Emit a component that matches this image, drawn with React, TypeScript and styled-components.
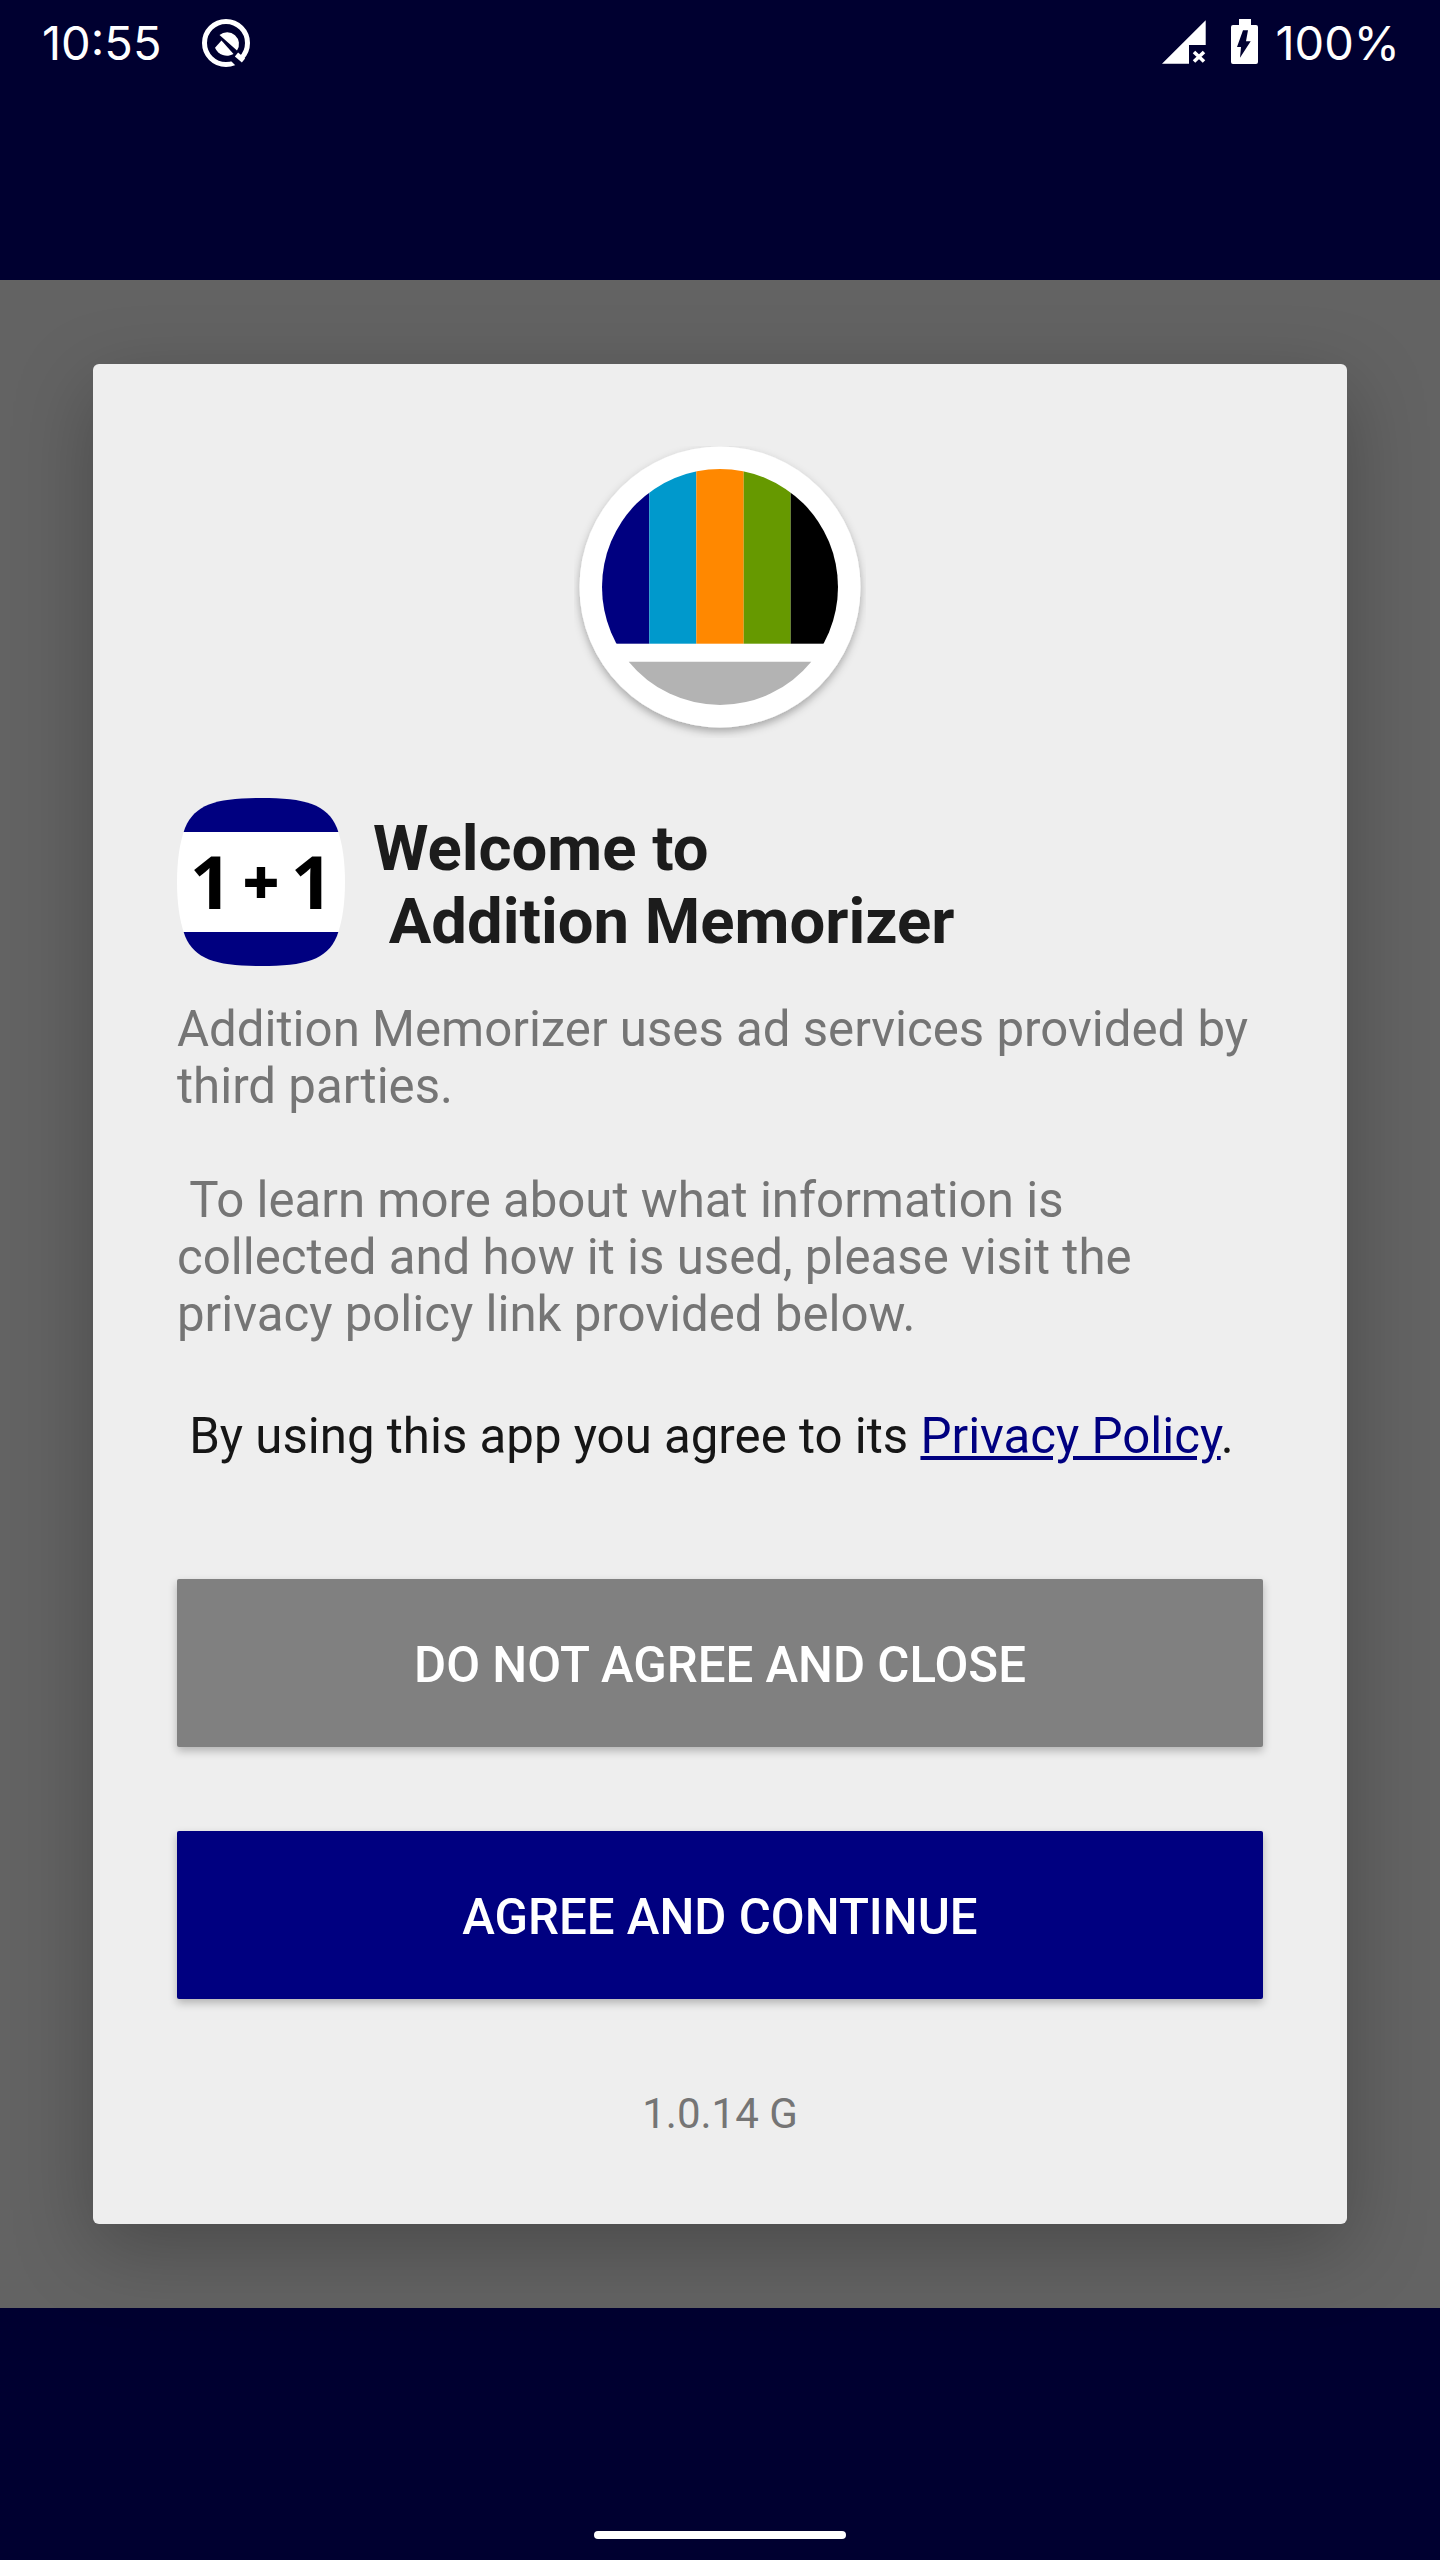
import React from "react";
import styled, { createGlobalStyle } from "styled-components";

const Global = createGlobalStyle`
  html, body { margin: 0; padding: 0; background: #000030; }
  body { font-family: Roboto, "Liberation Sans", sans-serif; }
`;

const Screen = styled.div`
  width: 1440px;
  height: 2560px;
  display: flex;
  flex-direction: column;
  background: #000030;
  overflow: hidden;
`;

const StatusBar = styled.div`
  height: 86px;
  flex: none;
  padding: 0 40px 0 42px;
  box-sizing: border-box;
  display: flex;
  align-items: center;
  justify-content: space-between;
  color: #fff;
`;

const StatusGroup = styled.div`
  display: flex;
  align-items: center;
`;

const StatusText = styled.span`
  font-family: Inter, Roboto, sans-serif;
  font-size: 47px;
  line-height: 86px;
`;

const AppBar = styled.div`
  height: 194px;
  flex: none;
`;

const Overlay = styled.div`
  height: 2028px;
  flex: none;
  background: #636363;
  padding: 84px 93px 0;
  box-sizing: border-box;
`;

const Card = styled.div`
  height: 1860px;
  background: #eeeeee;
  border-radius: 6px;
  box-shadow: 0 24px 80px rgba(0, 0, 0, 0.26);
  padding: 82px 84px 0;
  box-sizing: border-box;
  display: flex;
  flex-direction: column;
`;

const Badge = styled.svg`
  width: 292px;
  height: 292px;
  align-self: center;
  flex: none;
`;

const TitleRow = styled.div`
  display: flex;
  align-items: center;
  margin-top: 60px;
  gap: 28px;
`;

const Title = styled.h1`
  margin: 0;
  padding-top: 5px;
  font-size: 63.4px;
  line-height: 73px;
  font-weight: 700;
  color: #1c1c1c;
  white-space: pre;
  font-family: Roboto, sans-serif;
`;

const Body = styled.p`
  margin: 35px 0 0;
  font-size: 49.2px;
  line-height: 57px;
  color: #757575;
  white-space: pre-wrap;
`;

const Agreement = styled.p`
  margin: 65px 0 0;
  font-size: 49.2px;
  line-height: 57px;
  color: #161616;
  white-space: pre-wrap;
`;

const PolicyLink = styled.a`
  color: #000080;
  text-decoration: underline;
`;

const ActionButton = styled.button<{ $primary?: boolean }>`
  display: block;
  width: 100%;
  height: 168px;
  flex: none;
  border: 0;
  border-radius: 2px;
  padding: 3px 0 0;
  margin-top: ${(p) => (p.$primary ? "84px" : "114px")};
  background: ${(p) => (p.$primary ? "#000080" : "#808080")};
  color: #fff;
  font-family: Roboto, sans-serif;
  font-size: 49.2px;
  font-weight: 500;
  box-shadow: 0 4px 8px rgba(0, 0, 0, 0.25);
  text-transform: uppercase;
`;

const Version = styled.div`
  margin-top: 91px;
  text-align: center;
  font-size: 42px;
  line-height: 48px;
  color: #757575;
`;

const NavBar = styled.div`
  flex: 1;
  display: flex;
  justify-content: center;
  align-items: flex-end;
  padding-bottom: 21px;
`;

const HomeHandle = styled.div`
  width: 252px;
  height: 8px;
  border-radius: 4px;
  background: #fff;
`;

const QIcon = styled.svg`
  width: 52px;
  height: 52px;
  margin-left: 39px;
`;

const SignalIcon = styled.svg`
  width: 46px;
  height: 46px;
  margin-bottom: 2px;
`;

const BatteryIcon = styled.svg`
  width: 28px;
  height: 46px;
  margin-left: 24px;
  margin-bottom: 2px;
`;

const Percent = styled(StatusText)`
  margin-left: 16px;
`;

const AppIcon = styled.svg`
  width: 168px;
  height: 168px;
  flex: none;
`;

export default function App() {
  return (
    <Screen>
      <Global />
      <StatusBar>
        <StatusGroup>
          <StatusText>10:55</StatusText>
          <QIcon viewBox="0 0 52 52">
            <circle cx="26" cy="26" r="21.5" fill="none" stroke="#fff" strokeWidth="5" />
            <path d="M19.5 18A11.8 11.8 0 0 1 37 33.5Z" fill="#fff" />
            <path d="M15 30.7L21.5 23.5L33.5 37A13 13 0 0 1 15 30.7Z" fill="#fff" />
            <path d="M37 38L43 44L37 50L31 44Z" fill="#000030" />
            <path d="M36.5 37.5L43.5 43.5" stroke="#fff" strokeWidth="5" />
          </QIcon>
        </StatusGroup>
        <StatusGroup>
          <SignalIcon viewBox="0 0 46 46">
            <path d="M1 44.7 44.7 1.3V26H28v18.7z" fill="#fff" />
            <path d="M33 33l10 9.5M43 33 33 42.5" stroke="#fff" strokeWidth="3.6" />
          </SignalIcon>
          <BatteryIcon viewBox="0 0 28 46">
            <path d="M8 0h12v6h5a2 2 0 0 1 2 2v35a2 2 0 0 1-2 2H2a2 2 0 0 1-2-2V8a2 2 0 0 1 2-2h6z" fill="#fff" />
            <path d="M12 11.3 6 28h4l-1 10.7L19.7 22.3H15l2-11z" fill="#000030" />
          </BatteryIcon>
          <Percent>100%</Percent>
        </StatusGroup>
      </StatusBar>
      <AppBar />
      <Overlay>
        <Card>
          <Badge viewBox="0 0 292 292">
            <defs>
              <clipPath id="dome">
                <circle cx="146" cy="141" r="118" />
              </clipPath>
              <filter id="soft" x="-20%" y="-20%" width="140%" height="140%">
                <feDropShadow dx="0" dy="4" stdDeviation="4" floodColor="#000" floodOpacity="0.3" />
              </filter>
            </defs>
            <circle cx="146" cy="141" r="140.5" fill="#fff" filter="url(#soft)" />
            <g clipPath="url(#dome)">
              <rect x="0" y="0" width="75.3" height="197.7" fill="#000080" />
              <rect x="75.3" y="0" width="47" height="197.7" fill="#0099cc" />
              <rect x="122.3" y="0" width="47.4" height="197.7" fill="#ff8800" />
              <rect x="169.7" y="0" width="47" height="197.7" fill="#669900" />
              <rect x="216.7" y="0" width="75.3" height="197.7" fill="#000" />
            </g>
            <path d="M54.7 215.7H237.3A118 118 0 0 1 54.7 215.7Z" fill="#b3b3b3" />
          </Badge>
          <TitleRow>
            <AppIcon viewBox="0 0 168 168">
              <defs>
                <clipPath id="squircle">
                  <path d="M84 0C128 0 150 6 160 30 166 46 168 66 168 84 168 102 166 122 160 138 150 162 128 168 84 168 40 168 18 162 8 138 2 122 0 102 0 84 0 66 2 46 8 30 18 6 40 0 84 0Z" />
                </clipPath>
              </defs>
              <g clipPath="url(#squircle)">
                <rect width="168" height="168" fill="#fff" />
                <rect width="168" height="34" fill="#000080" />
                <rect y="134" width="168" height="34" fill="#000080" />
              </g>
              <text x="34" y="111" textAnchor="middle" fontFamily="'Open Sans', sans-serif" fontWeight="700" fontSize="74" fill="#000">1</text>
              <text x="84" y="107" textAnchor="middle" fontFamily="'Open Sans', sans-serif" fontWeight="800" fontSize="64" fill="#000">+</text>
              <text x="135" y="111" textAnchor="middle" fontFamily="'Open Sans', sans-serif" fontWeight="700" fontSize="74" fill="#000">1</text>
            </AppIcon>
            <Title>{"Welcome to\n Addition Memorizer"}</Title>
          </TitleRow>
          <Body>
            {"Addition Memorizer uses ad services provided by third parties.\n\n To learn more about what information is collected and how it is used, please visit the privacy policy link provided below."}
          </Body>
          <Agreement>
            {" By using this app you agree to its "}
            <PolicyLink>Privacy Policy</PolicyLink>.
          </Agreement>
          <ActionButton>Do not agree and close</ActionButton>
          <ActionButton $primary>Agree and continue</ActionButton>
          <Version>1.0.14 G</Version>
        </Card>
      </Overlay>
      <NavBar>
        <HomeHandle />
      </NavBar>
    </Screen>
  );
}
